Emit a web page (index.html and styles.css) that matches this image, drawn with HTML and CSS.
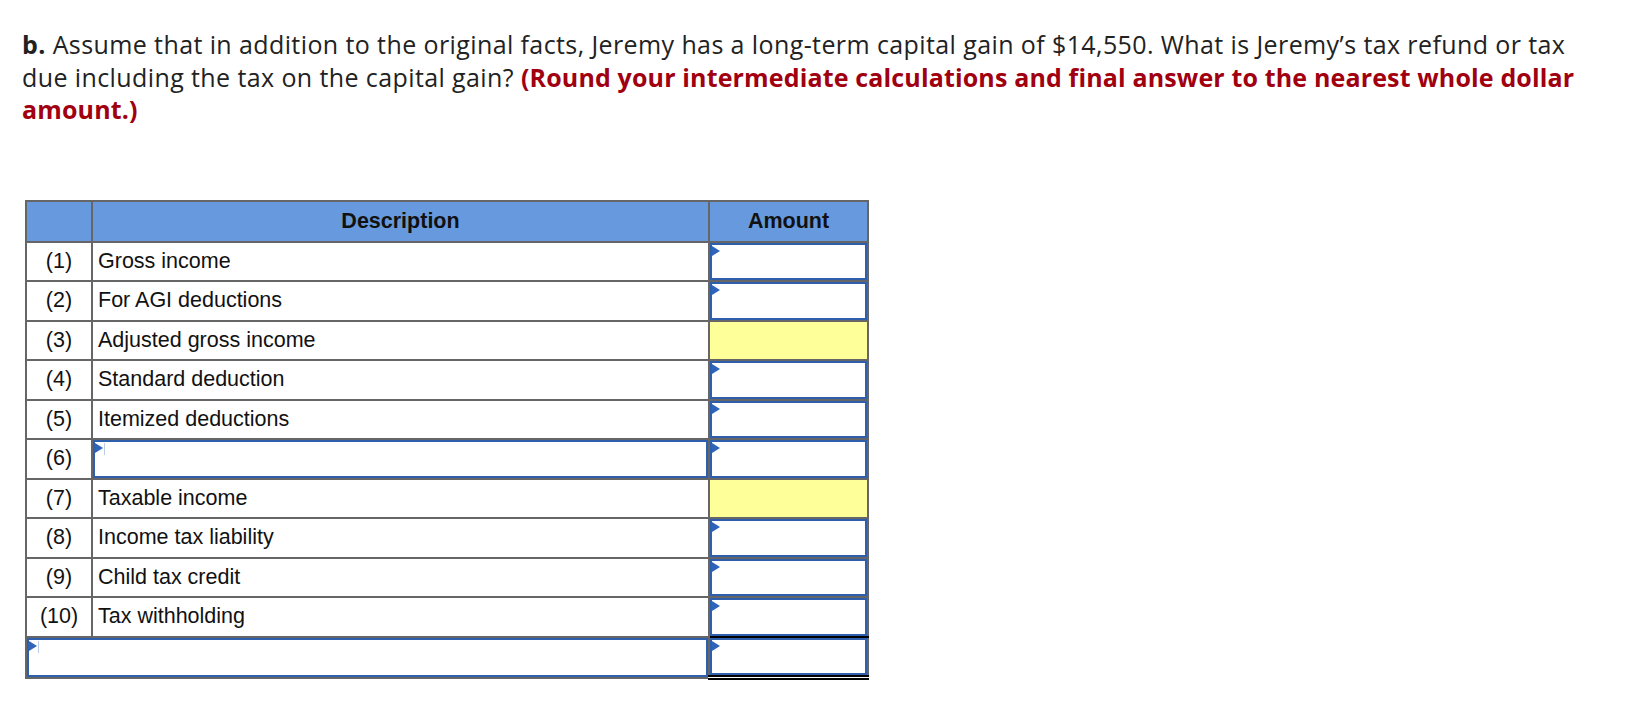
FILE: index.html
```html
<!DOCTYPE html>
<html lang="en">
<head>
<meta charset="utf-8">
<title>Tax refund worksheet</title>
<link rel="stylesheet" href="styles.css">
</head>
<body>
<main class="page">
  <p class="prompt"><strong>b.</strong> Assume that in addition to the original facts, Jeremy has a long-term capital gain of $14,550. What is Jeremy’s tax refund or tax due including the tax on the capital gain? <strong class="hint">(Round your intermediate calculations and final answer to the nearest whole dollar amount.)</strong></p>

  <table class="sheet">
    <thead>
      <tr>
        <th class="num"></th>
        <th class="desc">Description</th>
        <th class="amt">Amount</th>
      </tr>
    </thead>
    <tbody>
      <tr><td class="num">(1)</td><td class="desc">Gross income</td><td class="amt input"><div class="box"></div></td></tr>
      <tr><td class="num">(2)</td><td class="desc">For AGI deductions</td><td class="amt input"><div class="box"></div></td></tr>
      <tr><td class="num">(3)</td><td class="desc">Adjusted gross income</td><td class="amt calc"></td></tr>
      <tr><td class="num">(4)</td><td class="desc">Standard deduction</td><td class="amt input"><div class="box"></div></td></tr>
      <tr><td class="num">(5)</td><td class="desc">Itemized deductions</td><td class="amt input"><div class="box"></div></td></tr>
      <tr><td class="num">(6)</td><td class="desc input"><div class="box caret"></div></td><td class="amt input"><div class="box"></div></td></tr>
      <tr><td class="num">(7)</td><td class="desc">Taxable income</td><td class="amt calc"></td></tr>
      <tr><td class="num">(8)</td><td class="desc">Income tax liability</td><td class="amt input"><div class="box"></div></td></tr>
      <tr><td class="num">(9)</td><td class="desc">Child tax credit</td><td class="amt input"><div class="box"></div></td></tr>
      <tr><td class="num">(10)</td><td class="desc">Tax withholding</td><td class="amt input total"><div class="box"></div></td></tr>
      <tr><td class="wide input" colspan="2"><div class="box caret"></div></td><td class="amt input grand"><div class="box"></div></td></tr>
    </tbody>
  </table>
</main>
</body>
</html>
```

FILE: styles.css
```css
html, body {
  margin: 0;
  padding: 0;
  background: #ffffff;
}

.page {
  padding: 28px 0 0 22px;
}

.prompt {
  margin: 0;
  width: 1575px;
  font-family: "Open Sans", Lato, sans-serif;
  font-size: 25px;
  letter-spacing: 0.4px;
  line-height: 32.5px;
  color: #222222;
}

.prompt strong {
  font-weight: 700;
}

.prompt .hint {
  color: #a0000f;
  letter-spacing: 0.15px;
}

.sheet {
  margin: 74px 0 0 3px;
  border-collapse: collapse;
  font-family: "Liberation Sans", Arial, sans-serif;
  font-size: 21.5px;
  color: #111111;
}

.sheet th,
.sheet td {
  border: 2px solid #666666;
  padding: 0;
}

.sheet th {
  height: 39px;
  background: #6699dd;
  font-weight: 700;
  text-align: center;
}

.sheet td {
  height: 37.5px;
}

.num {
  width: 64px;
  text-align: center;
}

.desc {
  width: 610px;
  text-align: left;
}

td.desc {
  padding-left: 5px;
}

td.desc.input {
  padding-left: 0;
}

.amt {
  width: 157px;
}

.calc {
  background: #ffff99;
}

.input {
  position: relative;
}

.box {
  position: absolute;
  inset: 0;
  border: 2px solid #2e5fac;
  background: #ffffff;
}

.box::before {
  content: "";
  position: absolute;
  left: 0;
  top: 1px;
  border-style: solid;
  border-width: 5px 0 5px 8px;
  border-color: transparent transparent transparent #2e64b9;
}

.box.caret::after {
  content: "";
  position: absolute;
  left: 9px;
  top: 1px;
  width: 1px;
  height: 12px;
  background: #b9cde8;
}

.sheet td.total {
  border-bottom: 2px solid #000000;
}

.sheet td.grand {
  border-bottom: 5px double #000000;
}
```
